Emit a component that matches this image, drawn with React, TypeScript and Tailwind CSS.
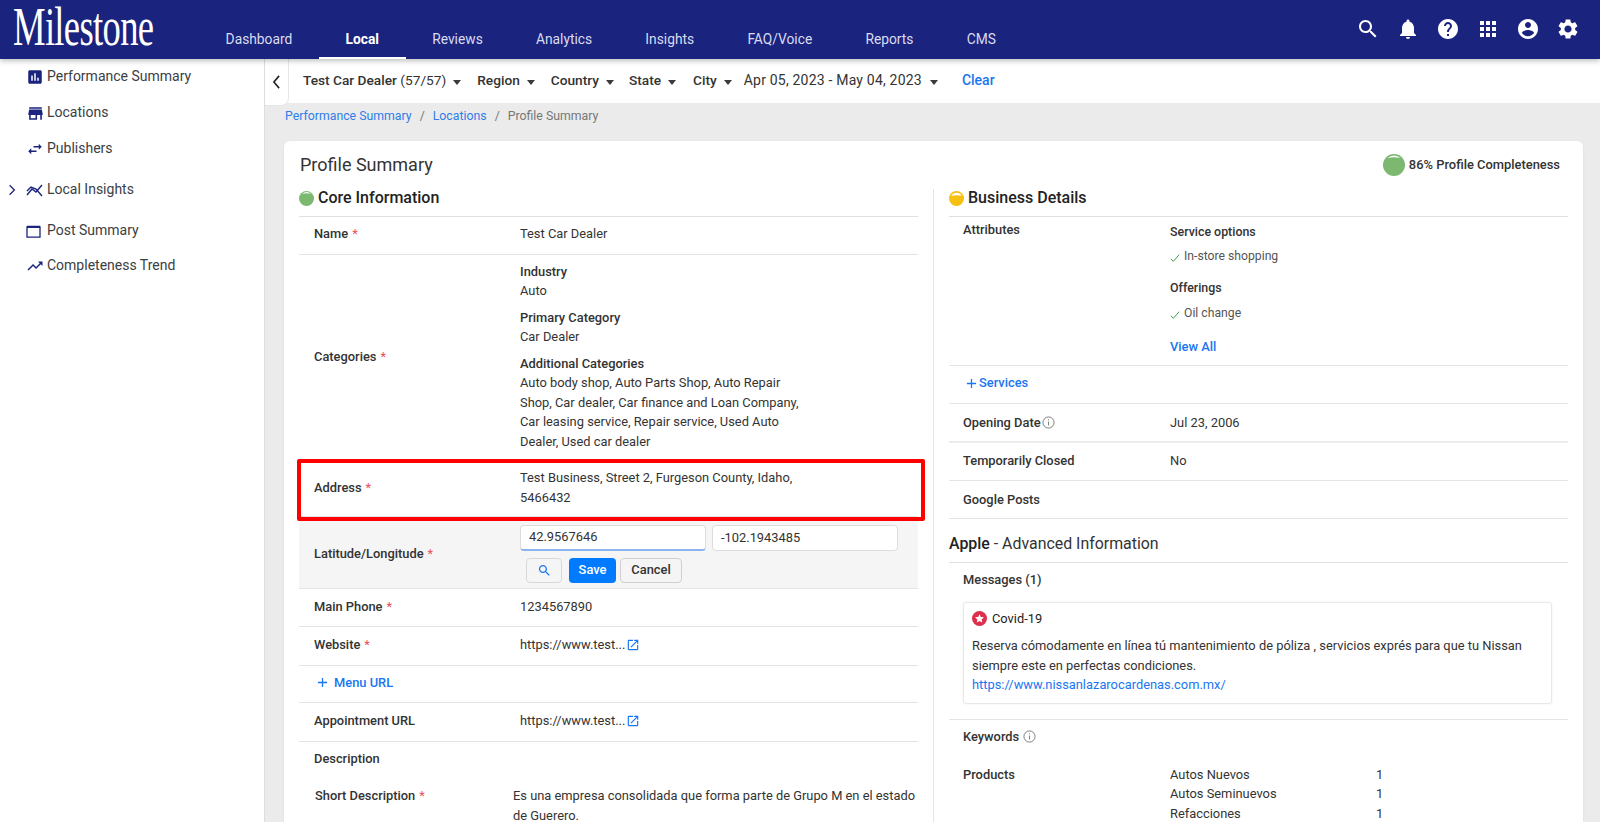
import type { ReactNode } from 'react'

const OPEN_NEW = 'M19 19H5V5h7V3H5c-1.11 0-2 .9-2 2v14c0 1.1.89 2 2 2h14c1.1 0 2-.9 2-2v-7h-2v7zM14 3v2h3.59l-9.83 9.83 1.41 1.41L19 6.41V10h2V3h-7z'

function Mi({ d, className }: { d: string; className?: string }) {
  return (
    <svg viewBox="0 0 24 24" fill="currentColor" className={className}>
      <path d={d} />
    </svg>
  )
}

const topIcons = [
  'M15.5 14h-.79l-.28-.27C15.41 12.59 16 11.11 16 9.5 16 5.91 13.09 3 9.5 3S3 5.91 3 9.5 5.91 16 9.5 16c1.61 0 3.09-.59 4.23-1.57l.27.28v.79l5 4.99L20.49 19l-4.99-5zm-6 0C7.01 14 5 11.99 5 9.5S7.01 5 9.5 5 14 7.01 14 9.5 11.99 14 9.5 14z',
  'M12 22c1.1 0 2-.9 2-2h-4c0 1.1.89 2 2 2zm6-6v-5c0-3.07-1.64-5.64-4.5-6.32V4c0-.83-.67-1.5-1.5-1.5s-1.5.67-1.5 1.5v.68C7.63 5.36 6 7.92 6 11v5l-2 2v1h16v-1l-2-2z',
  'M12 2C6.48 2 2 6.48 2 12s4.48 10 10 10 10-4.48 10-10S17.52 2 12 2zm1 17h-2v-2h2v2zm2.07-7.75l-.9.92C13.45 12.9 13 13.5 13 15h-2v-.5c0-1.1.45-2.1 1.17-2.83l1.24-1.26c.37-.36.59-.86.59-1.41 0-1.1-.9-2-2-2s-2 .9-2 2H8c0-2.21 1.79-4 4-4s4 1.79 4 4c0 .88-.36 1.68-.93 2.25z',
  'M4 8h4V4H4v4zm6 12h4v-4h-4v4zm-6 0h4v-4H4v4zm0-6h4v-4H4v4zm6 0h4v-4h-4v4zm6-10v4h4V4h-4zm-6 4h4V4h-4v4zm6 6h4v-4h-4v4zm0 6h4v-4h-4v4z',
  'M12 2C6.48 2 2 6.48 2 12s4.48 10 10 10 10-4.48 10-10S17.52 2 12 2zm0 3c1.66 0 3 1.34 3 3s-1.34 3-3 3-3-1.34-3-3 1.34-3 3-3zm0 14.2c-2.5 0-4.71-1.28-6-3.22.03-1.99 4-3.08 6-3.08 1.99 0 5.97 1.09 6 3.08-1.29 1.94-3.5 3.22-6 3.22z',
  'M19.14 12.94c.04-.3.06-.61.06-.94 0-.32-.02-.64-.07-.94l2.03-1.58c.18-.14.23-.41.12-.61l-1.92-3.32c-.12-.22-.37-.29-.59-.22l-2.39.96c-.5-.38-1.03-.7-1.62-.94l-.36-2.54c-.04-.24-.24-.41-.48-.41h-3.84c-.24 0-.43.17-.47.41l-.36 2.54c-.59.24-1.13.57-1.62.94l-2.39-.96c-.22-.08-.47 0-.59.22L2.74 8.87c-.12.21-.08.47.12.61l2.03 1.58c-.05.3-.09.63-.09.94s.02.64.07.94l-2.03 1.58c-.18.14-.23.41-.12.61l1.92 3.32c.12.22.37.29.59.22l2.39-.96c.5.38 1.03.7 1.62.94l.36 2.54c.05.24.24.41.48.41h3.84c.24 0 .44-.17.47-.41l.36-2.54c.59-.24 1.13-.56 1.62-.94l2.39.96c.22.08.47 0 .59-.22l1.92-3.32c.12-.22.07-.47-.12-.61l-2.01-1.58zM12 15.6c-1.98 0-3.6-1.62-3.6-3.6s1.62-3.6 3.6-3.6 3.6 1.62 3.6 3.6-1.62 3.6-3.6 3.6z',
]

function Header() {
  const nav = ['Dashboard', 'Local', 'Reviews', 'Analytics', 'Insights', 'FAQ/Voice', 'Reports', 'CMS']
  return (
    <header className="relative z-20 flex h-[59px] items-stretch bg-[#1a237e] shadow-[0_2px_5px_rgba(0,0,0,0.25)]">
      {/* logo is squeezed with scale-x, so its box is wider than what shows */}
      <div className="-mr-[41px] w-[240px] shrink-0 whitespace-nowrap pl-[13px]">
        <span className="inline-block origin-left scale-x-[0.678] font-['Liberation_Serif',serif] text-[54px] leading-[54px] tracking-[-1px] text-white">
          Milestone
        </span>
      </div>
      <nav className="flex items-stretch">
        {nav.map((item) => (
          <span
            key={item}
            className={
              item === 'Local'
                ? 'flex items-center border-b-2 border-white px-[26.6px] pt-[22px] text-[13.8px] font-bold text-white'
                : 'flex items-center border-b-2 border-transparent px-[26.6px] pt-[22px] text-[13.8px] text-[#d9dcf0]'
            }
          >
            {item}
          </span>
        ))}
      </nav>
      <div className="ml-auto flex items-center gap-[16px] pb-[2px] pr-[20px] text-white">
        {topIcons.map((d) => (
          <Mi key={d} d={d} className="h-[24px] w-[24px]" />
        ))}
      </div>
    </header>
  )
}

function SideItem({ icon, label, className, chevron }: { icon: ReactNode; label: string; className: string; chevron?: boolean }) {
  return (
    <div className={`flex items-center text-[14px] text-[#3c4043] ${className}`}>
      <span className="flex w-[26px] justify-start pl-[8px]">
        {chevron && (
          <svg viewBox="0 0 10 14" className="h-[12px] w-[8px] text-[#1a237e]" fill="none" stroke="currentColor" strokeWidth="1.6">
            <path d="M2 1l6 6-6 6" />
          </svg>
        )}
      </span>
      <span className="flex h-[16px] w-[21px] items-center text-[#1a237e]">{icon}</span>
      <span>{label}</span>
    </div>
  )
}

function Sidebar() {
  return (
    <aside className="w-[265px] shrink-0 border-r border-[#dedede] bg-white">
      <SideItem
        className="mt-[9px] h-[18px]"
        label="Performance Summary"
        icon={<Mi d="M19 3H5c-1.1 0-2 .9-2 2v14c0 1.100.9 2 2 2h14c1.100 0 2-.9 2-2V5c0-1.100-.9-2-2-2zM9 17H7v-7h2v7zm4 0h-2V7h2v10zm4 0h-2v-4h2v4z" className="h-[18px] w-[18px] shrink-0" />}
      />
      <SideItem
        className="mt-[18px] h-[18px]"
        label="Locations"
        icon={<Mi d="M20 4H4v2h16V4zm1 10v-2l-1-5H4l-1 5v2h1v6h10v-6h4v6h2v-6h1zm-9 4H6v-4h6v4z" className="h-[19px] w-[19px] shrink-0" />}
      />
      <SideItem
        className="mt-[18px] h-[18px]"
        label="Publishers"
        icon={<Mi d="M6.99 11L3 15l3.99 4v-3H14v-2H6.99v-3zM21 9l-3.99-4v3H10v2h7.01v3L21 9z" className="h-[18px] w-[18px] shrink-0" />}
      />
      <SideItem
        chevron
        className="mt-[23px] h-[18px]"
        label="Local Insights"
        icon={
          <svg viewBox="0 0 18 14" className="h-[14px] w-[18px] shrink-0" fill="none" stroke="currentColor" strokeWidth="1.4">
            <path d="M1 12l5-6 4 3 6-7" />
            <path d="M1 8l4-4 5 2 6 7" />
          </svg>
        }
      />
      <SideItem
        className="mt-[23px] h-[18px]"
        label="Post Summary"
        icon={
          <svg viewBox="0 0 16 14" className="h-[13px] w-[15px] shrink-0" fill="none" stroke="currentColor">
            <path d="M1 2h14v11H1z" strokeWidth="1.4" />
            <path d="M1 2h14" strokeWidth="2.4" />
          </svg>
        }
      />
      <SideItem
        className="mt-[17px] h-[18px]"
        label="Completeness Trend"
        icon={<Mi d="M16 6l2.29 2.29-4.88 4.88-4-4L2 16.59 3.41 18l6-6 4 4 6.3-6.29L22 12V6z" className="h-[18px] w-[18px] shrink-0" />}
      />
    </aside>
  )
}

function Caret({ className = '' }: { className?: string }) {
  return <span className={`inline-block h-0 w-0 border-x-[4.5px] border-t-[5px] border-x-transparent border-t-[#3a3a3a] ${className}`} />
}

function FilterBar() {
  const items = [
    { label: 'Region', w: 'ml-[16px]' },
    { label: 'Country', w: 'ml-[16px]' },
    { label: 'State', w: 'ml-[15px]' },
    { label: 'City', w: 'ml-[17px]' },
  ]
  return (
    <div className="relative flex h-[44px] shrink-0 items-center bg-white text-[13.7px] text-[#333]">
      <div className="absolute left-0 top-0 flex h-[47px] w-[24px] items-center justify-center rounded-br-[8px] border-b border-r border-[#e6e6e6] bg-white">
        <svg viewBox="0 0 10 16" className="h-[14px] w-[9px] text-[#222]" fill="none" stroke="currentColor" strokeWidth="1.8">
          <path d="M8 1L2 8l6 7" />
        </svg>
      </div>
      <span className="ml-[38px] font-medium">Test Car Dealer <span className="font-normal">(57/57)</span></span>
      <Caret className="ml-[7px] mt-[2px]" />
      {items.map((i) => (
        <span key={i.label} className={`flex items-center font-medium ${i.w}`}>
          {i.label}
          <Caret className="ml-[7px] mt-[2px]" />
        </span>
      ))}
      <span className="ml-[12px] text-[14px] tracking-[0.2px]">Apr 05, 2023 - May 04, 2023</span>
      <Caret className="ml-[8px] mt-[2px]" />
      <span className="ml-[24px] text-[14px] font-medium text-[#1976f2]">Clear</span>
    </div>
  )
}

function Dot({ color, cap, size }: { color: string; cap: string; size: string }) {
  return (
    <svg viewBox="0 0 24 24" className={size}>
      <circle cx="12" cy="12" r="12" fill={color} />
      <path d={cap} fill="#fff" />
    </svg>
  )
}

const THIN_CAP = 'M5 4.500A10 10 0 0 1 19 4.500Q12 2.600 5 4.500z'
const WIDE_CAP = 'M3.500 7.500A10 10 0 0 1 20.500 7.500Q12 5.800 3.500 7.500z'

function Req() {
  return <span className="ml-[4px] font-normal text-[#e8505b]">*</span>
}

function Row({ label, required, children, className = 'h-[38px] pb-[2px]' }: { label?: string; required?: boolean; children?: ReactNode; className?: string }) {
  return (
    <div className={`flex items-center border-b border-[#e4e4e4] ${className}`}>
      <div className="w-[221px] shrink-0 pl-[15px] font-medium">
        {label}
        {required && <Req />}
      </div>
      <div>{children}</div>
    </div>
  )
}

function External() {
  return <Mi d={OPEN_NEW} className="ml-[1px] inline-block h-[14px] w-[14px] align-[-3px] text-[#1976f2]" />
}

function Plus() {
  return (
    <svg viewBox="0 0 12 12" className="h-[11px] w-[11px] text-[#1976f2]" fill="none" stroke="currentColor" strokeWidth="1.4">
      <path d="M6 1v10M1 6h10" />
    </svg>
  )
}

function SectionHead({ color, cap, title }: { color: string; cap: string; title: string }) {
  return (
    <div className="flex h-[28px] items-center gap-[4px] border-b border-[#e0e0e0] pb-[10px]">
      <span className="mt-[2px]">
        <Dot color={color} cap={cap} size="h-[15px] w-[15px]" />
      </span>
      <span className="text-[16px] font-medium leading-none text-[#222]">{title}</span>
    </div>
  )
}

function CoreInfo() {
  return (
    <div className="w-[619px] shrink-0">
      <SectionHead color="#7cb870" cap={THIN_CAP} title="Core Information" />
      <Row label="Name" required className="h-[38px] pb-[3px]">Test Car Dealer</Row>
      <Row label="Categories" required className="h-[206px] pb-[2px]">
        <div className="w-[284px]">
          <p className="font-medium">Industry</p>
          <p>Auto</p>
          <p className="mt-[7px] font-medium">Primary Category</p>
          <p>Car Dealer</p>
          <p className="mt-[7px] font-medium">Additional Categories</p>
          <p>Auto body shop, Auto Parts Shop, Auto Repair Shop, Car dealer, Car finance and Loan Company, Car leasing service, Repair service, Used Auto Dealer, Used car dealer</p>
        </div>
      </Row>
      <div className="relative">
        <Row label="Address" required className="h-[56px] pb-[2px]">
          <div className="w-[284px]">Test Business, Street 2, Furgeson County, Idaho, 5466432</div>
        </Row>
        <div className="absolute -bottom-[4px] -left-[2px] -right-[7px] -top-[2px] z-10 rounded-[2px] border-4 border-[#ff0000]" />
      </div>
      <Row label="Latitude/Longitude" required className="h-[72px] bg-[#f5f5f5] pt-[2px]">
        <div className="flex gap-[6px]">
          <div className="flex h-[26px] w-[186px] items-center rounded-[4px] border border-b-2 border-[#dcdcdc] border-b-[#8ab4f0] bg-white pl-[8px]">42.9567646</div>
          <div className="flex h-[26px] w-[186px] items-center rounded-[4px] border border-[#dcdcdc] bg-white pl-[8px]">-102.1943485</div>
        </div>
        <div className="mt-[7px] flex items-center pl-[6px]">
          <span className="flex h-[25px] w-[36px] items-center justify-center rounded-[4px] border border-[#d8d8d8] text-[#1976f2]">
            <Mi d={topIcons[0]} className="h-[15px] w-[15px]" />
          </span>
          <span className="ml-[7px] flex h-[25px] w-[47px] items-center justify-center rounded-[4px] bg-[#007bff] font-medium text-white">Save</span>
          <span className="ml-[4px] flex h-[25px] w-[62px] items-center justify-center rounded-[4px] border border-[#d0d0d0] font-medium">Cancel</span>
        </div>
      </Row>
      <Row label="Main Phone" required>1234567890</Row>
      <Row label="Website" required className="h-[39px] pb-[2px]">https://www.test...<External /></Row>
      <div className="flex h-[37px] items-center gap-[6px] border-b border-[#e4e4e4] pb-[3px] pl-[18px] font-medium text-[#1976f2]">
        <Plus />
        Menu URL
      </div>
      <Row label="Appointment URL" className="h-[39px] pb-[2px]">https://www.test...<External /></Row>
      <div className="flex h-[35px] items-center pb-[2px] pl-[15px] font-medium">Description</div>
      <div className="mt-[9px] flex">
        <div className="w-[214px] shrink-0 pl-[16px] font-medium">
          Short Description
          <Req />
        </div>
        <p className="w-[405px] pr-[2px]">Es una empresa consolidada que forma parte de Grupo M en el estado de Guerero.</p>
      </div>
    </div>
  )
}

function Check({ label, className }: { label: string; className: string }) {
  return (
    <p className={`flex items-center gap-[4px] text-[12.2px] text-[#555] ${className}`}>
      <svg viewBox="0 0 12 12" className="mt-[3px] h-[10px] w-[10px] text-[#43a047]" fill="none" stroke="currentColor" strokeWidth="1.2">
        <path d="M1 7l3 3 7-8" />
      </svg>
      {label}
    </p>
  )
}

function Info({ className = '' }: { className?: string }) {
  return (
    <svg viewBox="0 0 14 14" className={`inline-block h-[13px] w-[13px] text-[#666] ${className}`} fill="none" stroke="currentColor" strokeWidth="0.9">
      <circle cx="7" cy="7" r="6" />
      <path d="M7 6v4.200M7 3.600v1.100" />
    </svg>
  )
}

function RRow({ label, value, className = 'h-[38px] pb-[2px]' }: { label?: ReactNode; value?: string; className?: string }) {
  return (
    <div className={`flex items-center border-b border-[#e4e4e4] ${className}`}>
      <div className="w-[221px] shrink-0 pl-[14px] font-medium">{label}</div>
      <div>{value}</div>
    </div>
  )
}

function Details() {
  const products = ['Autos Nuevos', 'Autos Seminuevos', 'Refacciones']
  return (
    <div className="ml-[15px] flex-1 border-l border-[#e4e4e4] pl-[15px]">
      <SectionHead color="#f5c010" cap={WIDE_CAP} title="Business Details" />
      <div className="flex h-[149px] border-b border-[#e4e4e4]">
        <div className="w-[221px] shrink-0 pl-[14px] pt-[3px] font-medium">Attributes</div>
        <div className="pt-[5px]">
          <p className="text-[12.4px] font-medium">Service options</p>
          <Check label="In-store shopping" className="mt-[5px]" />
          <p className="mt-[12px] text-[12.4px] font-medium">Offerings</p>
          <Check label="Oil change" className="mt-[6px]" />
          <p className="mt-[14px] font-medium text-[#1976f2]">View All</p>
        </div>
      </div>
      <div className="flex h-[38px] items-center gap-[2px] border-b border-[#e4e4e4] pb-[3px] pl-[17px] font-medium text-[#1976f2]">
        <Plus />
        Services
      </div>
      <RRow
        className="h-[39px] border-b-2 border-b-[#ececec]"
        label={<span>Opening Date<Info className="ml-[1px] align-[-2px]" /></span>}
        value="Jul 23, 2006"
      />
      <RRow label="Temporarily Closed" value="No" />
      <RRow label="Google Posts" className="h-[38px]" />
      <div className="flex h-[44px] items-center border-b border-[#e0e0e0] pt-[6px] text-[15.9px] text-[#333]">
        <span className="font-medium text-[#222]">Apple</span>&nbsp;- Advanced Information
      </div>
      <div className="h-[157px] border-b border-[#e4e4e4] px-[15px]">
        <p className="-ml-[1px] pt-[7px] font-medium">Messages (1)</p>
        <div className="-ml-[1px] mt-[12px] h-[102px] w-[589px] rounded-[3px] border border-[#e8e8e8] px-[8px] pt-[6px] shadow-[0_0_2px_rgba(0,0,0,0.08)]">
          <div className="flex items-center gap-[5px] text-[#222]">
            <svg viewBox="0 0 24 24" className="h-[15px] w-[15px]">
              <circle cx="12" cy="12" r="12" fill="#dc2f4b" />
              <path d="M12 5l2.100 4.600 5 .5-3.700 3.300 1 4.900-4.400-2.500-4.400 2.500 1-4.900L4.900 10.100l5-.5z" fill="#fff" />
            </svg>
            Covid-19
          </div>
          <p className="mt-[8px]">Reserva cómodamente en línea tú mantenimiento de póliza , servicios exprés para que tu Nissan siempre este en perfectas condiciones.</p>
          <p className="text-[#1976f2]">https://www.nissanlazarocardenas.com.mx/</p>
        </div>
      </div>
      <p className="flex items-center gap-[4px] pl-[14px] pt-[7px] font-medium">
        Keywords <Info />
      </p>
      <div className="mt-[18px] flex pl-[14px]">
        <div className="w-[207px] shrink-0 font-medium">Products</div>
        <div>
          {products.map((p) => (
            <div key={p} className="flex">
              <span className="w-[206px]">{p}</span>
              <span>1</span>
            </div>
          ))}
        </div>
      </div>
    </div>
  )
}

export default function App() {
  return (
    <div className="flex h-[822px] flex-col overflow-hidden bg-white font-['Roboto',sans-serif] text-[12.86px] leading-[19.5px] text-[#333]">
      <Header />
      <div className="flex min-h-0 flex-1">
        <Sidebar />
        <main className="flex min-w-0 flex-1 flex-col bg-[#ebebeb]">
          <FilterBar />
          <div className="flex h-[38px] shrink-0 items-center pb-[11px] pl-[20px] text-[12.3px] text-[#777]">
            <span className="text-[#2f7de8]">Performance Summary</span>
            <span className="mx-[8px]">/</span>
            <span className="text-[#2f7de8]">Locations</span>
            <span className="mx-[8px]">/</span>
            <span>Profile Summary</span>
          </div>
          <section className="ml-[19px] mr-[17px] flex-1 rounded-t-[6px] bg-white px-[15px] shadow-[0_1px_3px_rgba(0,0,0,0.06)]">
            <div className="flex h-[48px] items-center justify-between pr-[8px]">
              <h1 className="pl-[1px] text-[18px] text-[#333]">Profile Summary</h1>
              <div className="flex items-center gap-[4px] text-[12.9px] font-medium text-[#333]">
                <Dot color="#7cb870" cap={THIN_CAP} size="h-[22px] w-[22px]" />
                86% Profile Completeness
              </div>
            </div>
            <div className="flex">
              <CoreInfo />
              <Details />
            </div>
          </section>
        </main>
      </div>
    </div>
  )
}
